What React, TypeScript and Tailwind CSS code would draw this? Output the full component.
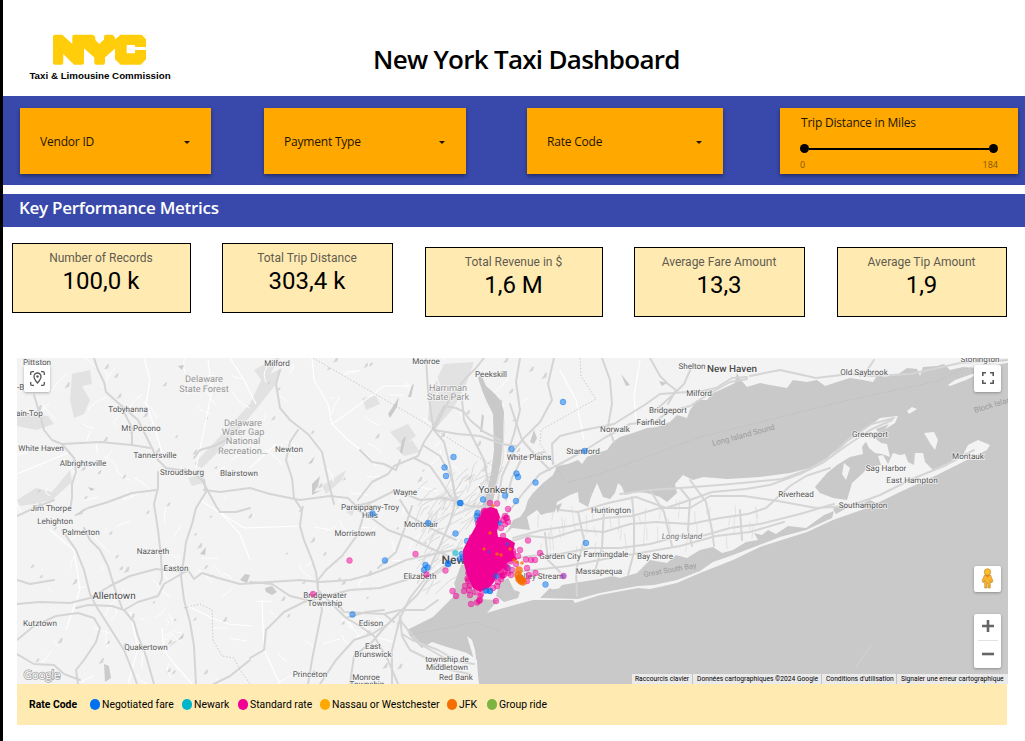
import type { ReactNode } from "react";

const TREB = "font-['Trebuchet_MS','Open_Sans',sans-serif]";
const ROBOTO = "font-['Roboto',sans-serif]";

function createRandom(seed: number) {
  let s = seed;
  return () => {
    s = (s * 1664525 + 1013904223) % 4294967296;
    return s / 4294967296;
  };
}

/* ---------- Header ---------- */

function Logo() {
  return (
    <div className="flex w-[142px] flex-col items-center">
      <svg width="96" height="34" viewBox="52 33 96 34" aria-label="NYC">
        <path
          d="M55 34.700H62.300L72.300 44V36.500Q72.300 34.700 74.300 34.700H93L95.300 37V40L99.300 44L104 39.500V36.500Q104 34.700 106 34.700H112.500L115 37.500V39.500L120.500 34.700H141.500L146 39.300V47H135V45H126.700V53.300H135V50H146V59.300L140.700 64.700H120.700L115 59.300V48.500L105 57.500V62.700Q105 64.700 103 64.700H96.300Q94.300 64.700 94.300 62.700V57.500L84 48.300V62.700Q84 64.700 82 64.700H74L63.300 54V62.700Q63.300 64.700 61.300 64.700H55Q53 64.700 53 62.700V36.700Q53 34.700 55 34.700Z"
          fill="#ffcd0a"
        />
        <circle cx="145.500" cy="35.500" r="0.700" fill="#ffe789" />
      </svg>
      <div className="mt-[3px] whitespace-nowrap font-['Liberation_Sans',sans-serif] text-[9.75px] font-bold leading-3 text-black">
        Taxi &amp; Limousine Commission
      </div>
    </div>
  );
}

/* ---------- Filters ---------- */

function Filter({ label, className }: { label: string; className: string }) {
  return (
    <div
      className={`flex h-[66px] items-center justify-between bg-[#ffa800] pt-[1px] pr-[21px] pl-5 shadow-[0_2px_4px_rgba(0,0,0,0.4)] ${className}`}
    >
      <span className={`${TREB} text-[12px] leading-4 tracking-[-0.2px] text-[#1d1500]`}>{label}</span>
      <svg className="mt-[2px]" width="6" height="3" viewBox="0 0 6 3">
        <path d="M0 0H6L3 3Z" fill="#1d1500" />
      </svg>
    </div>
  );
}

function DistanceSlider() {
  return (
    <div className="ml-[57px] flex h-[66px] w-[238px] flex-col bg-[#ffa800] pt-[7px] pr-5 pl-5 shadow-[0_2px_4px_rgba(0,0,0,0.4)]">
      <span className={`${TREB} pl-px text-[12px] leading-4 tracking-[-0.2px] text-[#1d1500]`}>Trip Distance in Miles</span>
      <div className="mt-[13px] flex h-[9px] items-center">
        <span className="size-[9px] rounded-full bg-black" />
        <span className="h-[2px] grow bg-black" />
        <span className="size-[9px] rounded-full bg-black" />
      </div>
      <div className={`${TREB} mt-[6px] flex justify-between text-[9px] leading-3 text-[#80560a]`}>
        <span>0</span>
        <span>184</span>
      </div>
    </div>
  );
}

/* ---------- Metrics ---------- */

function Metric({ label, value, className }: { label: string; value: string; className: string }) {
  return (
    <div
      className={`${ROBOTO} flex h-[70px] flex-col items-center border border-black bg-[#ffebb2] pt-[6px] pr-px ${className}`}
    >
      <span className="text-[12px] leading-4 text-[#5f5b50]">{label}</span>
      <span className="text-[24px] leading-[30px] text-black">{value}</span>
    </div>
  );
}

/* ---------- Map ---------- */

const FORESTS = [
  "M72 374L90 370L92 384L82 386L90 400L84 414L74 418L70 400Z",
  "M17 412L48 416L54 424L36 430L17 426Z",
  "M17 500L36 488L52 492L70 470L72 482L52 500L34 504L20 506Z",
  "M262 378L282 368L276 384L262 402L244 424L222 448L202 468L194 464L224 432L250 404Z",
  "M188 478L202 474L206 482L192 486Z",
  "M444 364L474 362L464 390L452 410L436 428L428 420L430 394Z",
  "M390 432L408 424L416 436L402 446Z",
  "M362 398L376 396L380 404L366 410Z",
  "M396 448L412 440L420 452L404 456Z",
  "M346 512L356 506L352 516Z",
  "M322 486L346 470L342 480L326 494Z",
  "M724 486L738 484L736 498L726 498Z",
  "M792 500L806 494L802 508L790 508Z",
  "M752 490L764 488L762 500Z",
  "M978 440L988 444L984 450L972 452Z",
  "M254 370L276 358L280 358L264 384Z",
];

const WATER =
  "M1007 363L990 366L975 368L963 367L950 370L944 364L937 366L923 367L920 376L917 369L907 368L897 375L883 377L880 371L873 382L863 380L850 378L837 382L825 386L817 380L807 382L793 380L787 388L770 385L760 383L747 387L740 379L737 373L735 383L720 390L713 393L707 400L697 400L690 410L687 418L677 415L670 422L657 427L647 428L633 433L620 437L613 442L607 450L597 453L587 457L582 464L578 460L568 464L557 466L553 475L543 483L533 493L528 500L525 510L520 517L513 520L508 530L498 540L484 560L478 580L464 570L456 580L454 596L433 617L407 630L410 636L422 648L432 642L447 647L467 653L477 660L478 684H1007Z";

const LONG_ISLAND =
  "M498 540L512 528L530 530L527 517L537 510L541 515L547 513L555 512L557 502L570 495L578 492L579 502L588 507L591 497L597 483L603 497L610 499L615 493L618 483L622 487L625 495L637 492L647 493L660 497L667 502L677 493L675 484L683 475L693 480L703 477L727 479L760 477L790 473L810 468L827 458L840 447L853 438L867 428L880 418L898 416L895 423L887 428L877 433L867 440L862 447L863 454L850 457L837 465L827 473L815 487L820 493L833 498L847 500L850 490L852 483L863 473L868 467L881 465L878 456L883 455L888 464L893 453L900 455L905 454L908 462L914 465L915 453L923 453L925 462L933 470L950 462L963 455L968 445L978 440L990 445L987 450L967 460L937 475L900 492L867 508L833 520L807 532L760 547L733 560L700 573L677 583L650 589L638 588L600 595L575 603L573 600L533 600L500 609L487 613L498 600L478 599L474 584L480 566Z";

const BAYS = [
  "M758 540L754 533L762 535L768 530L776 534L788 526L806 528L824 515L834 511L832 518L806 530L780 537L754 547L733 555L713 562L700 571L677 580L654 585L638 586L600 593L578 599L540 598L550 588L556 592L562 585L580 582L600 579L612 576L620 578L637 573L643 567L650 560L667 563L676 555L687 558L700 550L713 547L722 553L733 550L746 542Z",
  "M500 582L508 578L514 590L520 592L518 598L504 602L496 596Z",
  "M548 590L562 588L570 596L552 597Z",
  "M876 429L889 424L885 429L878 432Z",
  "M859 505L870 500L878 504L870 509Z",
  "M833 509L842 503L847 508L836 514Z",
  "M555 506L558 513L562 503Z",
];

const HUDSON =
  "M478 378L481 374L486 386L494 393L501 401L504 412L503 440L501 462L496 485L492 507L484 521L472 545L467 560L465 580L458 590L454 584L461 565L466 548L477 522L485 498L491 474L494 450L493 414L486 400L482 390Z";

const SMALL_ISLES = [
  "M865 440L874 437L881 443L887 444L890 457L882 454L875 453L869 448Z",
  "M924 433L934 432L938 440L935 450L930 443Z",
  "M907 411L912 407L917 409L909 414Z",
  "M948 385L955 380L972 374L980 373L966 380L950 386Z",
  "M844 463L850 468L846 480L842 474Z",
  "M467 636L472 640L475 650L479 684H476L473 656Z",
  "M617 496L620 484L623 492Z",
];

const LAKES = [
  "M178 366L184 365L182 370Z", "M388 414L399 397L397 407L390 418Z",
  "M312 484L320 476L318 486L314 492L322 490L312 495Z", "M308 464L315 456L312 463Z",
  "M265 588L272 586L277 592L272 595L266 592Z", "M200 554L206 547L205 555Z",
  "M240 580L245 574L250 575L247 583Z", "M168 648L178 640L184 633L183 638L174 642Z",
  "M104 664L109 666L111 678L105 682Z", "M74 516L85 508L82 514Z",
  "M88 487L95 489L91 491Z", "M400 452L402 440L406 436L402 454Z",
  "M408 397L412 385L414 384L411 397Z", "M480 432L482 414L484 416L482 432Z",
  "M463 482L474 474L470 479Z", "M530 442L534 430L537 438L534 444Z",
  "M621 374L630 385L626 386Z", "M659 381L667 383L662 386Z",
];

const HIGHWAYS = [
  "M94 358L98 370L104 382L106 392L124 408L138 420L146 436L152 448L158 460L166 468L180 470L194 474L202 480L210 495L216 506L220 512",
  "M34 395L41 418L44 430L52 440L62 444L100 442L132 445L150 448",
  "M132 444L132 428L124 412",
  "M62 444L74 458L76 472L72 484L72 498L70 510",
  "M17 516L34 508L54 500",
  "M76 515L88 508L108 502L132 493L156 490",
  "M158 472L158 488L154 504L158 530L161 556L162 578L160 584",
  "M204 480L206 492L196 508L192 524L186 542L184 558L181 576L184 600L190 622L194 646L196 684",
  "M204 490L220 492L250 488L270 494L300 500L330 496L348 498L356 506L372 502L396 490L420 500L444 498L470 506L488 507",
  "M220 512L236 512L250 508",
  "M194 458L200 450L214 446L226 440",
  "M280 370L276 384L280 408L290 420L308 434L322 452L328 480L334 504",
  "M298 430L290 442L286 460L292 478L294 498L302 510L300 526L304 540L312 560L316 572L318 590L322 610L316 640L312 660L308 684",
  "M62 530L76 550L84 570L90 594L96 606L110 628L124 650L132 670L137 684",
  "M17 604L40 602L70 603L90 598L110 586L130 576L156 569L186 572",
  "M76 608L88 605L112 606L124 610L138 602L158 596L164 584L178 576L188 570L194 579L202 573L218 578L240 584L270 582L300 580L320 582L350 580L372 574L388 568L406 560L424 556L444 552L462 548",
  "M124 610L134 622L138 636L146 656L154 684",
  "M17 640L34 626L56 616L78 613L94 618L100 628L96 642L84 660L76 670L78 684",
  "M17 654L34 664L54 665L64 674L80 680",
  "M84 528L90 540L100 550L108 566L114 586L122 608",
  "M354 508L364 514L358 534L342 556L326 570L318 580L318 590L334 606L346 618L366 612L384 610",
  "M358 500L372 482L388 474L394 466L418 456L424 442L432 430L444 406L456 408L464 412L470 420L484 432L500 440",
  "M360 450L372 462L384 464L396 470L400 460",
  "M414 458L430 466L440 480L450 496L462 506",
  "M434 430L444 442L450 466L454 490L458 508",
  "M424 446L440 456L452 478L456 500L450 522L438 550L424 580L410 598L400 618L392 650L392 684",
  "M434 430L458 434L480 436L502 444L516 446",
  "M462 400L464 420L474 440L484 460L488 482",
  "M426 358L428 390L432 420L434 430",
  "M484 358L476 368L466 378L450 398L440 418L434 430",
  "M520 358L516 382L520 410L514 434L508 452",
  "M554 358L548 384L552 400L540 422L524 438L514 450L502 476L498 500",
  "M602 358L610 380L612 404L608 426L614 442",
  "M747 377L732 378L716 388L702 391L660 394L646 404L630 414L614 424L584 430L560 436L552 444L553 464",
  "M747 379L730 382L712 392L690 406L668 412L656 421L630 424L606 437L582 452L556 466L540 474L524 492L510 510L500 522",
  "M510 404L522 440L536 456L550 470",
  "M506 500L512 478L522 458L544 452",
  "M750 376L780 370L816 378L850 374L872 376L910 374L960 363L1007 360",
  "M650 358L660 376L668 384L676 390L668 404",
  "M692 366L684 384L676 392L656 410",
  "M874 360L866 372L860 376",
  "M17 580L30 584L54 580",
  "M250 582L272 584L290 596L316 602L338 604L344 612L384 614L394 622",
  "M250 658L264 650L266 630L284 612L304 602L326 596L350 590L380 588L412 578",
  "M214 684L230 676L250 660",
  "M320 684L336 660L354 640L372 634L388 624L400 612L418 594L430 576L450 562",
  "M350 684L354 656L372 642L384 628L398 614",
  "M366 514L388 530L410 538L430 548L448 556",
  "M400 500L410 516L434 530L456 540",
  "M378 568L396 552L404 530L412 506",
  "M400 616L402 636L410 650L426 658L450 670L470 674",
  "M402 634L412 640L438 650L452 658",
  "M400 620L408 630L420 644L448 660L474 664",
  "M384 614L400 610L424 610L438 600",
  "M346 618L360 626L374 636L388 660L398 684",
  "M496 546L528 536L552 538L578 530L604 532L630 524L656 522L690 524L720 518L748 514L766 508L790 486L806 476L830 468",
  "M500 561L530 556L560 554L590 548L620 548L650 544L680 536L702 536L730 528L760 524L800 514L834 504",
  "M500 574L534 570L568 566L610 558L640 553L680 546L716 536L750 532L784 522",
  "M513 538L542 530L570 526L604 518L632 516L660 508L690 508L710 496L744 496L778 501L816 508L850 506L880 495L912 479L944 466L974 450",
  "M560 510L578 512L608 503L636 497L666 508L690 500L712 492L746 489L770 485L800 474L824 462L846 446L870 430L892 420",
  "M620 494L650 490L680 488L720 485L752 482L782 479L810 469L832 456L850 438L872 424L894 418",
  "M578 512L584 540L576 570L577 596",
  "M632 497L634 520L634 552L628 575",
  "M690 480L706 502L712 530L714 546",
  "M650 490L664 512L672 546",
  "M545 533L548 560L560 572",
  "M680 488L690 500L688 530L692 546",
  "M740 510L742 540",
  "M604 508L602 548L594 574",
];

const MINOR = [
  "M144 358L150 380L146 404L154 426L162 452", "M208 360L212 390L204 430L196 468",
  "M17 474L46 462L70 452", "M312 358L314 380L328 404L332 424L348 440L366 454L376 466",
  "M332 424L352 410L384 386L414 386", "M230 358L244 380L256 404",
  "M250 468L276 444", "M162 628L164 650L176 666L192 684",
  "M188 606L212 618L228 624L252 626", "M50 530L74 550L80 590L66 630",
  "M130 612L138 648L128 684", "M218 510L240 534L250 560",
  "M262 600L264 650L280 684", "M200 500L244 528L300 526",
  "M560 370L576 400L584 440", "M640 360L634 396L636 420",
];

const PLACES: [string, number, number][] = [
  ["Pittston", 37, 365], ["Tobyhanna", 128, 412], ["Mt Pocono", 141, 431],
  ["White Haven", 41, 451], ["Albrightsville", 83, 466], ["Tannersville", 155, 458],
  ["Stroudsburg", 182, 475], ["Blairstown", 239, 476], ["Jim Thorpe", 51, 510.500],
  ["Lehighton", 55, 524], ["Palmerton", 81, 534.500], ["Nazareth", 153, 554],
  ["Easton", 176, 571], ["Kutztown", 40, 625.500], ["Quakertown", 146, 649.500],
  ["Milford", 277, 366], ["Monroe", 426, 363.500], ["Peekskill", 491, 377],
  ["Newton", 289, 452], ["Wayne", 405, 494.500], ["Parsippany-Troy", 370, 510],
  ["Hills", 370, 518], ["Montclair", 421, 526.500], ["Morristown", 355, 536],
  ["Elizabeth", 420, 578.500], ["Bridgewater", 325, 597.500], ["Township", 325, 605.500],
  ["Edison", 371, 625.500], ["East", 373, 649], ["Brunswick", 373, 656.500],
  ["Princeton", 310, 677], ["Monroe", 366, 679.500], ["Township", 367, 687],
  ["township de", 447, 661.500], ["Middletown", 447, 669.500], ["Red Bank", 456, 680],
  ["White Plains", 529, 460], ["Stamford", 583, 454], ["Norwalk", 615, 432],
  ["Fairfield", 651, 425], ["Bridgeport", 668, 413], ["Milford", 699, 396],
  ["Shelton", 692, 368.500], ["Old Saybrook", 864, 375], ["Stonington", 980, 362],
  ["Greenport", 870, 437], ["Montauk", 968, 459], ["Sag Harbor", 886, 471],
  ["East Hampton", 912, 482.500], ["Riverhead", 796, 497], ["Southampton", 863, 508],
  ["Huntington", 611, 513], ["Garden City", 560, 558.500], ["Farmingdale", 606, 556.500],
  ["Bay Shore", 655, 559], ["Massapequa", 599, 573.500], ["Valley Stream", 539, 579],
];

const CORE =
  "M483 511L490 507L497 509L500 517L497 530L498 537L507 538L515 543L513 552L517 560L508 562L504 568L498 572L494 582L489 588L480 592L473 588L467 575L463 560L463 550L468 540L476 526Z";

const BLUE_DOTS: [number, number][] = [
  [563, 402], [511.500, 449], [584.500, 451], [516.500, 473.500], [518, 477], [535.500, 482.500],
  [505, 495.500], [516, 501], [453.500, 457], [444.500, 467.500], [446, 476], [483, 499.500],
  [460, 503], [460.500, 503], [372.500, 513.500], [428, 523], [477.500, 513], [477, 516], [477.500, 520], [455.500, 533.500],
  [467, 541], [385, 560.500], [352.500, 614.500], [425.500, 565], [427.500, 567.500], [424, 570],
  [448, 563.500], [448, 564], [462, 554], [463, 557], [460, 559], [586, 543], [545.500, 584.500],
  [486, 590.500], [490, 591], [496, 576], [499, 523], [507, 545], [508, 568],
];

const PINK_DOTS: [number, number][] = [
  [349.500, 560.500], [415.500, 554], [313, 594], [426.500, 574.500], [445.500, 570.500], [452.500, 591],
  [456, 596], [465, 586], [464, 591], [470, 595], [471, 604], [477, 602.500], [480, 600], [496, 601],
  [497, 586], [501, 579], [497, 503.500], [508, 509], [506, 518], [508, 522], [528, 540.500],
  [540, 553], [526, 559.500], [531, 560], [535, 560], [535.500, 573], [529, 575], [563.500, 576],
  [513, 551], [518, 556], [516, 564], [512, 570], [520, 550], [510, 547], [505, 548],
  [506, 560], [501, 573], [493, 588], [481, 594], [475, 592], [469, 590], [505, 516],
  [503, 520], [507, 518], [503, 536], [501, 528], [511, 575], [527, 581], [490, 503], [527, 568], [511, 558],
  [505, 524], [480, 596], [479, 601], [498, 582], [504, 575], [508, 573],
];

const ORANGE_DOTS: [number, number][] = [
  [519, 579], [521, 581], [523, 582], [518, 575], [519, 570], [520, 578], [514, 560],
  [517, 562], [522, 563], [501, 555], [497, 554], [510, 549], [493, 506], [490, 533], [484, 549], [522, 580],
];

function Terrain() {
  const random = createRandom(17);
  const onLand = (x: number, y: number) => x + y * 0.35 < 690 && !(x > 400 && y > 590);
  const streets: ReactNode[] = [];
  for (let i = 0; i < 210; i++) {
    const x = 17 + random() * 620;
    const y = 358 + random() * 326;
    const dx = (random() - 0.5) * 36;
    const dy = (random() - 0.5) * 36;
    const bend = (random() - 0.5) * 16;
    if (onLand(x, y)) {
      streets.push(<path key={i} d={`M${x} ${y}q${dx / 2 + bend} ${dy / 2} ${dx} ${dy}`} />);
    }
  }
  const ponds: ReactNode[] = [];
  for (let i = 0; i < 130; i++) {
    const x = 20 + random() * 560;
    const y = 360 + random() * 320;
    const w = 1.5 + random() * 3;
    if (onLand(x, y)) {
      ponds.push(<path key={i} d={`M${x} ${y}l${w} ${-w * 1.5}l1.5 .5l-1 ${w}z`} />);
    }
  }
  const urban: ReactNode[] = [];
  for (let i = 0; i < 110; i++) {
    const x = 414 + random() * 76;
    const y = 480 + random() * 115;
    urban.push(<path key={i} d={`M${x} ${y}l${3 + random() * 14} ${-4 - random() * 15}l${random() * 8} -3`} />);
  }
  return (
    <g>
      <g fill="#e2e2e2">{FORESTS.map((d) => <path key={d} d={d} />)}</g>
      <g fill="none" stroke="#fff" strokeWidth="1">{streets}</g>
      <g fill="#d5d5d5">{ponds}</g>
      <g fill="none" stroke="#fff" strokeWidth="1.2">{MINOR.map((d) => <path key={d} d={d} />)}</g>
      <g fill="none" stroke="#dadada" strokeWidth="1">{urban}</g>
    </g>
  );
}

function LongIslandStreets() {
  const random = createRandom(5);
  const lines: ReactNode[] = [];
  for (let i = 0; i < 44; i++) {
    const x = 530 + random() * 230;
    const y = 505 + random() * 45 - (x - 530) * 0.06;
    lines.push(<path key={i} d={`M${x} ${y}l${random() * 5 - 2} ${8 + random() * 14}`} />);
  }
  return <g fill="none" stroke="#e3e3e3" strokeWidth="1">{lines}</g>;
}

function TripDots() {
  const random = createRandom(91);
  const scatter: ReactNode[] = [];
  for (let i = 0; i < 110; i++) {
    const t = random();
    const y = 510 + t * 78;
    const left = 484 - Math.min(t * 2, 1) * 18;
    const right = 496 + Math.max(0, Math.sin((t - 0.3) * Math.PI * 1.6)) * 19;
    scatter.push(<circle key={i} cx={left + random() * (right - left)} cy={y} r="3.1" />);
  }
  return (
    <g>
      <g fill="#0072f0" fillOpacity="0.5" stroke="#0072f0" strokeOpacity="0.45" strokeWidth="0.8">
        {BLUE_DOTS.map(([x, y], i) => <circle key={i} cx={x} cy={y} r="2.900" />)}
      </g>
      <circle cx="455.500" cy="553" r="3.100" fill="#00b6cb" fillOpacity="0.6" />
      <path d={CORE} fill="#f10096" />
      <g fill="#f10096" fillOpacity="0.62">{scatter}</g>
      <g fill="#f10096" fillOpacity="0.5" stroke="#f10096" strokeOpacity="0.4" strokeWidth="0.8">
        {PINK_DOTS.map(([x, y], i) => <circle key={i} cx={x} cy={y} r="2.900" />)}
      </g>
      <g fill="#f66d00" fillOpacity="0.75">
        {ORANGE_DOTS.map(([x, y], i) => (
          <circle key={i} cx={x} cy={y} r={x > 515 && y > 568 ? 3.8 : 1.800} />
        ))}
      </g>
      <g fill="#0072f0" fillOpacity="0.5">
        <circle cx="486" cy="590.500" r="3" />
        <circle cx="490" cy="591" r="3" />
        <circle cx="496" cy="576" r="3" />
        <circle cx="499.500" cy="523" r="2" />
        <circle cx="507" cy="544" r="2" />
        <circle cx="563.500" cy="576" r="2.500" fillOpacity="0.3" />
        <circle cx="489" cy="552" r="1.500" />
      </g>
    </g>
  );
}

function MapCanvas() {
  return (
    <svg className={`${ROBOTO} block`} width="991" height="326" viewBox="17 358 991 326" textRendering="geometricPrecision">
      <rect x="17" y="358" width="991" height="326" fill="#f3f3f3" />
      <Terrain />
      <path d={WATER} fill="#c9c9c9" />
      <path d="M1006 363H1008V684H1006Z" fill="#c9c9c9" />
      <path d={LONG_ISLAND} fill="#f3f3f3" />
      <LongIslandStreets />
      <g fill="#c9c9c9">
        {BAYS.map((d) => <path key={d} d={d} />)}
        <path d={HUDSON} />
      </g>
      <g fill="#f3f3f3">{SMALL_ISLES.map((d) => <path key={d} d={d} />)}</g>
      <g fill="#cbcbcb">{LAKES.map((d) => <path key={d} d={d} />)}</g>
      <g fill="none" stroke="#d5d5d5" strokeWidth="2" strokeLinejoin="round" strokeLinecap="round">
        {HIGHWAYS.map((d) => <path key={d} d={d} />)}
      </g>
      <path d="M504 420L503 460L494 496" stroke="#dedede" fill="none" />
      <g fill="none" stroke="#b8b8b8" strokeWidth="0.700" strokeDasharray="1.5 1.8">
        <path d="M313 358L420 420L470 452L496 468" />
        <path d="M580 358L581 376L596 399L541 430L540 444L556 467L566 483L600 474L700 437L760 422L840 402L938 381L960 370L1007 360" />
        <path d="M184 608L200 604L212 610L213 640L222 656L234 658L240 670L250 684" />
        <path d="M410 635L477 622L500 632" />
      </g>
      <path d="M871 645L856 667" stroke="#d7d7d7" strokeWidth="0.700" />

      <g fill="#565656" stroke="#f8f8f8" strokeWidth="1.500" strokeOpacity="0.8" paintOrder="stroke" textAnchor="middle" fontSize="8.1">
        {PLACES.map(([name, x, y], i) => <text key={i} x={x} y={y}>{name}</text>)}
        <text x="17" y="390" textAnchor="start">-Ba</text>
        <text x="16" y="415.500" textAnchor="start">ain-Top</text>
        <text x="682" y="538.500" fontStyle="italic" fill="#777">Long Island</text>
      </g>
      <g fill="#4c4c4c" stroke="#f8f8f8" strokeWidth="1.600" strokeOpacity="0.8" paintOrder="stroke" textAnchor="middle">
        <text x="114" y="599" fontSize="9.800">Allentown</text>
        <text x="496" y="493" fontSize="9.800">Yonkers</text>
        <text x="732" y="371.500" fontSize="9.900" fontWeight="500">New Haven</text>
        <text x="441.500" y="564" fontSize="12" fontWeight="500" textAnchor="start">New York</text>
      </g>
      <g fill="#949494" stroke="#f5f5f5" strokeWidth="1.500" paintOrder="stroke" textAnchor="middle" fontSize="9.2">
        <text x="204" y="382">Delaware</text>
        <text x="204" y="391.500">State Forest</text>
        <text x="243" y="425.500">Delaware</text>
        <text x="243" y="434.800">Water Gap</text>
        <text x="243" y="444.200">National</text>
        <text x="243" y="453.500">Recreation…</text>
        <text x="448" y="390.500">Harriman</text>
        <text x="448" y="400">State Park</text>
      </g>
      <g fill="#9a9a9a" fontSize="7.800">
        <text transform="translate(713 446) rotate(-15)">Long Island Sound</text>
        <text transform="translate(975 413) rotate(-17)">Block Island</text>
        <text transform="translate(644 577) rotate(-10)" fontSize="7.500">Great South Bay</text>
      </g>
      <TripDots />
      <text x="23.500" y="678.500" fontSize="12" fontWeight="500" textLength="37" fill="#fff" stroke="#999" strokeWidth="1.400" paintOrder="stroke" fontFamily="Open Sans">
        Google
      </text>
    </svg>
  );
}

const CONTROL = "flex items-center justify-center rounded-[2px] bg-white shadow-[0_1px_3px_rgba(0,0,0,0.3)]";

function MapPanel() {
  return (
    <div className="relative ml-[14px] mt-[41px] h-[326px] w-[991px] overflow-hidden">
      <MapCanvas />
      <div className={`${CONTROL} absolute left-[7px] top-[7px] h-[27px] w-[26px]`}>
        <svg width="15" height="15" viewBox="0 0 15 15" fill="none" stroke="#555" strokeWidth="1.300">
          <path d="M.7 4V2Q.7.700 2 .7H4M11 .7H13Q14.300.700 14.300 2V4M.7 11V13Q.7 14.300 2 14.300H4M11 14.300H13Q14.300 14.300 14.300 13V11" />
          <path d="M7.500 12Q4 8 4 5.500A3.500 3.500 0 0 1 11 5.500Q11 8 7.500 12Z" />
          <circle cx="7.500" cy="5.500" r="1.200" fill="#555" stroke="none" />
        </svg>
      </div>
      <div className={`${CONTROL} absolute right-[7px] top-[7px] h-[27px] w-[27px] pb-px`}>
        <svg width="12" height="12" viewBox="0 0 12 12" fill="none" stroke="#5a5a5a" strokeWidth="1.600">
          <path d="M.8 4V.8H4M8 .8H11.200V4M.8 8V11.200H4M8 11.200H11.200V8" />
        </svg>
      </div>
      <div className={`${CONTROL} absolute right-[7px] top-[208px] h-[26px] w-[27px] pb-[2px]`}>
        <svg width="13" height="21" viewBox="0 0 13 21">
          <path d="M3.500 7H9.500L12 13L10.500 15L9.300 12.500V20H7V15H6V20H3.700V12.500L2.500 15L1 13Z" fill="#f9b42d" stroke="#b8862e" strokeWidth="0.600" />
          <path d="M4.500 7L6.500 9.500L8.500 7Z" fill="#f26b2c" />
          <circle cx="6.500" cy="4" r="3.300" fill="#fbbc2e" stroke="#b8862e" strokeWidth="0.600" />
        </svg>
      </div>
      <div className={`${CONTROL} absolute right-[7px] top-[256px] h-[54px] w-[27px] flex-col`}>
        <span className="flex h-[26px] items-center justify-center pb-[2px]">
          <svg width="12" height="12" viewBox="0 0 12 12">
            <path d="M0 6H12M6 0V12" stroke="#666" strokeWidth="2.600" />
          </svg>
        </span>
        <span className="h-px w-5 bg-[#e2e2e2]" />
        <span className="flex h-[27px] w-3 items-center pb-px">
          <svg width="12" height="4" viewBox="0 0 12 4">
            <path d="M0 2H12" stroke="#666" strokeWidth="2.600" />
          </svg>
        </span>
      </div>
      <div
        className={`${ROBOTO} absolute bottom-0 right-0 flex h-[10px] w-[376px] items-center bg-[#eaeaea] text-[6.7px] leading-[10px] whitespace-nowrap text-black`}
      >
        <span className="w-[61px] border-r border-[#c4c4c4] pl-[3px]">Raccourcis clavier</span>
        <span className="w-[129px] border-r border-[#c4c4c4] pl-1">Données cartographiques ©2024 Google</span>
        <span className="w-[75px] border-r border-[#c4c4c4] pl-1">Conditions d'utilisation</span>
        <span className="pl-1">Signaler une erreur cartographique</span>
      </div>
    </div>
  );
}

function LegendItem({ label, dot, className }: { label: string; dot: string; className: string }) {
  return (
    <div className={`flex shrink-0 items-center gap-[2px] ${className}`}>
      <span className={`h-[11px] w-[10px] rounded-full ${dot}`} />
      <span>{label}</span>
    </div>
  );
}

export default function App() {
  return (
    <div className="h-[741px] w-[1025px] overflow-hidden border-l-[3px] border-black bg-white">
      <header className="flex h-24 items-start">
        <div className="ml-[26px] mt-[33px]">
          <Logo />
        </div>
        <h1 className={`${TREB} ml-[202px] mt-[43px] whitespace-nowrap text-[26px] font-semibold leading-8 tracking-[-0.72px] text-black`}>
          New York Taxi Dashboard
        </h1>
      </header>

      <section className="flex h-[89px] items-start bg-[#3949ab] pl-[17px] pt-3">
        <Filter label="Vendor ID" className="w-[191px]" />
        <Filter label="Payment Type" className="ml-[53px] w-[202px]" />
        <Filter label="Rate Code" className="ml-[61px] w-[196px]" />
        <DistanceSlider />
      </section>

      <div className="mt-[9px] flex h-[33px] items-center bg-[#3949ab] pb-[6px] pl-4">
        <h2 className={`${TREB} text-[17px] font-semibold leading-6 tracking-[-0.28px] text-white`}>Key Performance Metrics</h2>
      </div>

      <section className="flex h-[90px] items-start pl-[9px] pt-4">
        <Metric label="Number of Records" value="100,0 k" className="w-[179px]" />
        <Metric label="Total Trip Distance" value="303,4 k" className="ml-[31px] w-[171px]" />
        <Metric label="Total Revenue in $" value="1,6 M" className="ml-8 mt-1 w-[178px]" />
        <Metric label="Average Fare Amount" value="13,3" className="ml-[31px] mt-1 w-[171px]" />
        <Metric label="Average Tip Amount" value="1,9" className="ml-8 mt-1 w-[170px]" />
      </section>

      <MapPanel />

      <footer
        className={`${ROBOTO} ml-[14px] flex h-[41px] w-[990px] items-center whitespace-nowrap bg-[#ffebb2] pl-3 text-[10.4px] text-black`}
      >
        <span className="w-[61px] font-bold">Rate Code</span>
        <LegendItem label="Negotiated fare" dot="bg-[#0072f0]" className="w-[92px]" />
        <LegendItem label="Newark" dot="bg-[#00b6cb]" className="w-14" />
        <LegendItem label="Standard rate" dot="bg-[#f10096]" className="w-[82px]" />
        <LegendItem label="Nassau or Westchester" dot="bg-[#ffa800]" className="w-[127px]" />
        <LegendItem label="JFK" dot="bg-[#f66d00]" className="w-10" />
        <LegendItem label="Group ride" dot="bg-[#7cb342]" className="" />
      </footer>
    </div>
  );
}
